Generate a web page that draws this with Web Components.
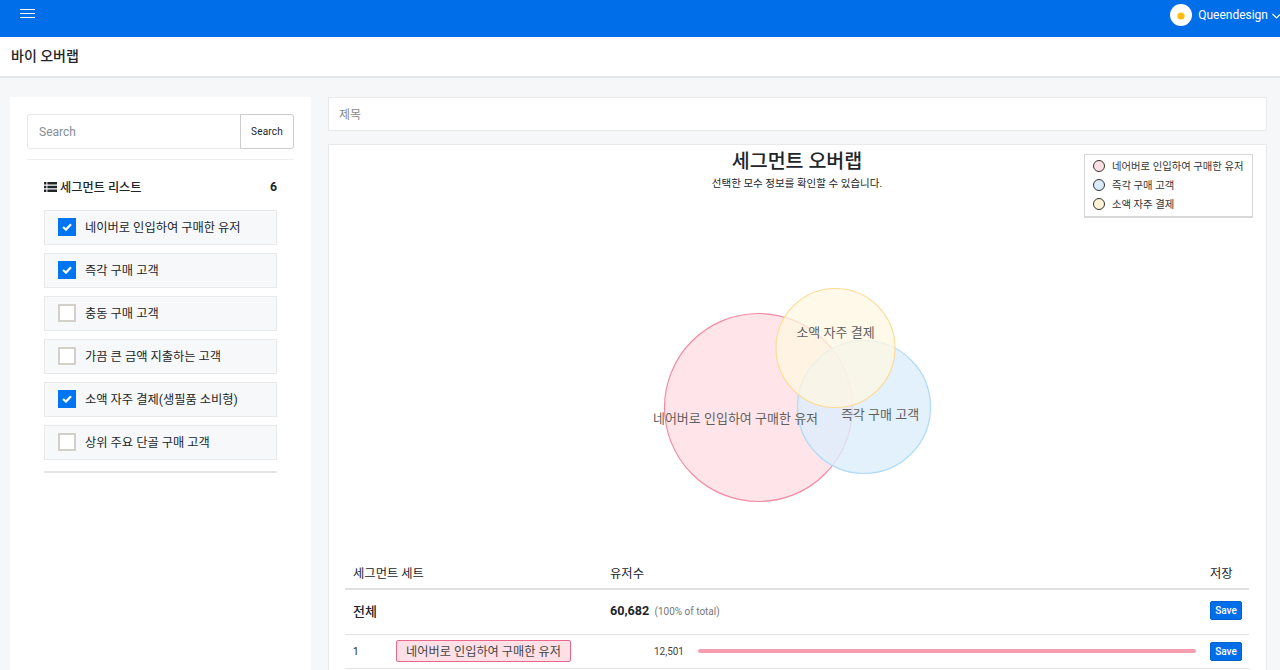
<!DOCTYPE html>
<html lang="ko">
<head>
<meta charset="utf-8">
<title>바이 오버랩</title>
<style>
  html, body { margin: 0; height: 670px; overflow: hidden; background: #f6f7f9; }
  body { font-family: Roboto, "Noto Sans CJK KR", sans-serif; color: #212529; }
</style>
</head>
<body>
<top-bar></top-bar>
<page-title>바이 오버랩</page-title>
<overlap-page>
  <segment-sidebar slot="side">
    <segment-item checked>네이버로 인입하여 구매한 유저</segment-item>
    <segment-item checked>즉각 구매 고객</segment-item>
    <segment-item>충동 구매 고객</segment-item>
    <segment-item>가끔 큰 금액 지출하는 고객</segment-item>
    <segment-item checked>소액 자주 결제(생필품 소비형)</segment-item>
    <segment-item>상위 주요 단골 구매 고객</segment-item>
  </segment-sidebar>
  <overlap-panel slot="main"></overlap-panel>
</overlap-page>

<script>
// --- Header ---
class TopBar extends HTMLElement {
    constructor() {
        super();
        this.attachShadow({ mode: 'open' });
        this.shadowRoot.innerHTML = `
            <style>
                :host { display: flex; align-items: flex-start; justify-content: space-between; height: 37px; background: #006de9; color: #fff; overflow: hidden; }
                .menu { display: block; margin: 8px 0 0 20px; }
                .user { display: flex; align-items: center; height: 29px; margin-right: -1px; font-size: 12px; }
                .user svg { display: block; }
                .avatar { margin-right: 6px; }
                .arrow { margin: 2px 0 0 4px; }
            </style>
            <svg class="menu" width="15" height="11" viewBox="0 0 15 11" stroke="#fff" fill="none"><path d="M0 1.5h15M0 5.5h15M0 9.5h15"/></svg>
            <div class="user">
                <svg class="avatar" width="22" height="22" viewBox="0 0 22 22"><circle cx="11" cy="11" r="11" fill="#fff"/><circle cx="11" cy="12" r="3.6" fill="#fdbc11"/></svg>
                <span>Queendesign</span>
                <svg class="arrow" width="9" height="6" viewBox="0 0 9 6" fill="none" stroke="#fff" stroke-width="1.2"><path d="M.5 1l4 4 4-4"/></svg>
            </div>`;
    }
}
customElements.define('top-bar', TopBar);

class PageTitle extends HTMLElement {
    constructor() {
        super();
        this.attachShadow({ mode: 'open' });
        this.shadowRoot.innerHTML = `
            <style>
                :host { display: flex; align-items: center; box-sizing: border-box; height: 41px; padding: 0 0 4px 11px; background: #fff; border-bottom: 2px solid #e3e5e9; font-size: 14px; font-weight: 500; color: #212529; }
            </style>
            <slot></slot>`;
    }
}
customElements.define('page-title', PageTitle);

// --- Page layout ---
class OverlapPage extends HTMLElement {
    constructor() {
        super();
        this.attachShadow({ mode: 'open' });
        this.shadowRoot.innerHTML = `
            <style>
                :host { display: grid; grid-template-columns: 301px 939px; gap: 17px; padding: 19px 0 0 10px; height: 573px; }
            </style>
            <slot name="side"></slot>
            <slot name="main"></slot>`;
    }
}
customElements.define('overlap-page', OverlapPage);

// --- Sidebar ---
class SegmentSidebar extends HTMLElement {
    constructor() {
        super();
        this.attachShadow({ mode: 'open' });
        this.shadowRoot.innerHTML = `
            <style>
                :host { display: block; box-sizing: border-box; background: #fff; padding: 17px 17px 0; height: 573px; }
                .search { display: flex; height: 35px; }
                input { box-sizing: border-box; width: 213px; height: 35px; padding: 0 11px; border: 1px solid #e8e9eb; border-right: 0; border-radius: 3px 0 0 3px; font: 12px Roboto, sans-serif; outline: 0; }
                input::placeholder { color: #868e96; opacity: 1; }
                button { box-sizing: border-box; width: 54px; height: 35px; padding: 0; background: #fff; border: 1px solid #ccc; border-radius: 0 3px 3px 0; font: 10px Roboto, sans-serif; letter-spacing: .2px; color: #212529; }
                hr { margin: 10px 0 0; border: 0; border-top: 1px solid #eceef0; }
                .list { padding: 0 17px; }
                .head { display: flex; align-items: center; justify-content: space-between; box-sizing: border-box; height: 50px; padding-top: 3px; font-size: 12.2px; font-weight: 500; color: #212529; }
                .head span { display: flex; align-items: center; gap: 3px; }
                .head svg { flex: none; }
                .items { display: flex; flex-direction: column; gap: 8px; padding-bottom: 11px; border-bottom: 2px solid #e3e5e7; }
            </style>
            <div class="search"><input placeholder="Search"><button>Search</button></div>
            <hr>
            <div class="list">
                <div class="head">
                    <span>
                        <svg width="13" height="10" viewBox="0 0 13 10" fill="#212529"><path d="M0 0h2.4v2.6H0zM3.4 0H13v2.6H3.4zM0 3.7h2.4v2.6H0zM3.4 3.7H13v2.6H3.4zM0 7.4h2.4V10H0zM3.4 7.4H13V10H3.4z"/></svg>
                        세그먼트 리스트
                    </span>
                    <b>6</b>
                </div>
                <div class="items"><slot></slot></div>
            </div>`;
    }
}
customElements.define('segment-sidebar', SegmentSidebar);

class SegmentItem extends HTMLElement {
    constructor() {
        super();
        this.attachShadow({ mode: 'open' });
    }

    connectedCallback() {
        const checked = this.hasAttribute('checked');
        this.shadowRoot.innerHTML = `
            <style>
                :host { display: flex; align-items: center; gap: 9px; box-sizing: border-box; height: 35px; padding: 0 0 2px 13px; background: #f7f8fa; border: 1px solid #e8e9eb; font-size: 12.25px; color: #212529; }
                .box { box-sizing: border-box; width: 18px; height: 18px; flex: none; display: flex; align-items: center; justify-content: center; background: ${checked ? '#0075f2' : '#fff'}; border: ${checked ? '0' : '2px solid #d3d0ca'}; }
            </style>
            <div class="box">${checked ? '<svg width="10" height="8" viewBox="0 0 10 8" fill="none" stroke="#fff" stroke-width="2.2"><path d="M1 4l3 2.6L9 1.2"/></svg>' : ''}</div>
            <slot></slot>`;
    }
}
customElements.define('segment-item', SegmentItem);

// --- Chart ---
class VennChart extends HTMLElement {
    constructor() {
        super();
        this.attachShadow({ mode: 'open' });
        this.shadowRoot.innerHTML = `
            <style>
                :host { display: block; height: 359px; }
                svg { display: block; }
                text { font: 13px Roboto, "Noto Sans CJK KR", sans-serif; fill: #5f5f5f; text-anchor: middle; }
            </style>
            <svg width="904" height="359" viewBox="345 197 904 359">
                <circle cx="758.5" cy="407.5" r="94" fill="#ffe5e9" stroke="#f58aa5" stroke-width="1.2"/>
                <circle cx="864" cy="407" r="66.5" fill="#dceefb" fill-opacity=".8" stroke="#b0daf6" stroke-width="1.2"/>
                <circle cx="835.5" cy="348" r="59.5" fill="#fff7e2" fill-opacity=".75" stroke="#fddb95" stroke-width="1.2"/>
                <text x="735.5" y="423">네어버로 인입하여 구매한 유저</text>
                <text x="880" y="419">즉각 구매 고객</text>
                <text x="835.5" y="337">소액 자주 결제</text>
            </svg>`;
    }
}
customElements.define('venn-chart', VennChart);

class ChartLegend extends HTMLElement {
    constructor() {
        super();
        this.attachShadow({ mode: 'open' });
        const rows = [['#ffdfe6', '네어버로 인입하여 구매한 유저'], ['#d9ecfb', '즉각 구매 고객'], ['#fff3d6', '소액 자주 결제']];
        this.shadowRoot.innerHTML = `
            <style>
                :host { position: absolute; top: 9px; right: 13px; box-sizing: border-box; width: 169px; height: 64px; padding: 1px 0 0 8px; background: #fff; border: 1px solid #d8d8d8; border-bottom-width: 2px; font-size: 10.35px; color: #333; }
                div { display: flex; align-items: center; gap: 7px; height: 19px; }
                i { box-sizing: border-box; width: 12px; height: 12px; border: 1px solid #333; border-radius: 50%; }
            </style>
            ${rows.map(r => `<div><i style="background:${r[0]}"></i>${r[1]}</div>`).join('')}`;
    }
}
customElements.define('chart-legend', ChartLegend);

// --- Table ---
class SegmentTable extends HTMLElement {
    constructor() {
        super();
        this.attachShadow({ mode: 'open' });
        this.shadowRoot.innerHTML = `
            <style>
                :host { display: block; font-size: 12.3px; color: #212529; }
                .row { display: grid; align-items: center; padding: 0 7px 0 8px; box-sizing: border-box; }
                .head, .total { grid-template-columns: 257px 1fr 32px; }
                .head { height: 34px; padding-top: 2px; border-bottom: 2px solid #e0e0e0; }
                .total { height: 45px; padding-bottom: 4px; border-bottom: 1px solid #e3e3e3; font-size: 13px; font-weight: 500; }
                .total small { margin-left: 2px; font-size: 10px; font-weight: 400; color: #777; }
                .total b { font-weight: 700; font-size: 12.6px; }
                .item { grid-template-columns: 43px 175px 113px 1fr 32px; height: 34px; padding-bottom: 1px; border-bottom: 1px solid #e3e3e3; font-size: 10px; }
                .tag { box-sizing: border-box; height: 22px; display: flex; align-items: center; justify-content: center; background: #ffe0e6; border: 1px solid #e8678a; border-radius: 2px; font-size: 12.2px; color: #444; }
                .num { text-align: right; color: #444; }
                .bar { height: 4px; margin: 0 14px 0 14px; background: #f59db1; border-radius: 2px; }
                button { box-sizing: border-box; width: 32px; height: 19px; padding: 0; background: #006de9; border: 1px solid #0062cc; border-radius: 2px; color: #fff; font: 500 10px Roboto, sans-serif; }
            </style>
            <div class="row head"><span>세그먼트 세트</span><span>유저수</span><span>저장</span></div>
            <div class="row total"><span>전체</span><span><b>60,682</b> <small>(100% of total)</small></span><button>Save</button></div>
            <div class="row item"><span>1</span><span class="tag">네어버로 인입하여 구매한 유저</span><span class="num">12,501</span><div class="bar"></div><button>Save</button></div>`;
    }
}
customElements.define('segment-table', SegmentTable);

// --- Main panel ---
class OverlapPanel extends HTMLElement {
    constructor() {
        super();
        this.attachShadow({ mode: 'open' });
        this.shadowRoot.innerHTML = `
            <style>
                :host { display: block; }
                .title { box-sizing: border-box; height: 34px; display: flex; align-items: center; padding: 0 0 2px 10px; background: #fff; border: 1px solid #e8e9eb; font-size: 12px; color: #8a8a8a; }
                .card { position: relative; box-sizing: border-box; height: 540px; margin-top: 13px; padding: 0 17px 0 16px; background: #fff; border: 1px solid #e8e9eb; }
                h2 { margin: 0; padding-top: 4px; height: 28px; text-align: center; font-size: 19.5px; line-height: 26px; font-weight: 500; color: #212529; }
                p { margin: 0; height: 20px; text-align: center; font-size: 10.5px; line-height: 14px; color: #212529; }
            </style>
            <div class="title">제목</div>
            <div class="card">
                <chart-legend></chart-legend>
                <h2>세그먼트 오버랩</h2>
                <p>선택한 모수 정보를 확인할 수 있습니다.</p>
                <venn-chart></venn-chart>
                <segment-table></segment-table>
            </div>`;
    }
}
customElements.define('overlap-panel', OverlapPanel);
</script>
</body>
</html>
